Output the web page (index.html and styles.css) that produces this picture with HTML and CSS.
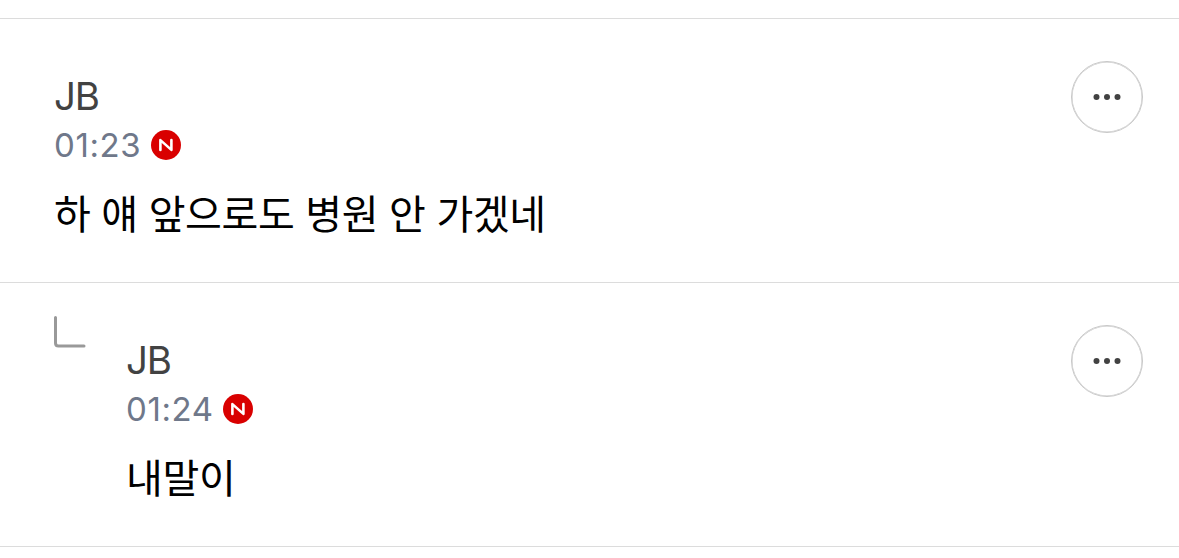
FILE: index.html
```
<!DOCTYPE html>
<html lang="ko">

<head>
    <meta charset="UTF-8">
    <meta name="viewport" content="width=device-width, initial-scale=1.0">
    <title>댓글</title>
    <link rel="stylesheet" href="styles.css">
</head>

<body>
    <ul class="comment-list">
        <li class="comment">
            <div class="comment-body">
                <div class="comment-name">JB</div>
                <div class="comment-info">
                    <span class="comment-time">01:23</span>
                    <svg class="icon-new" viewBox="0 0 30 30">
                        <circle cx="15" cy="15" r="15" />
                        <path d="M9.4 19.9V10.1L20.4 19.9V10.1" />
                    </svg>
                </div>
                <p class="comment-text">하 얘 앞으로도 병원 안 가겠네</p>
            </div>
            <button class="btn-more" type="button" aria-label="더보기">
                <svg viewBox="0 0 28 6">
                    <circle cx="3.5" cy="3" r="3" />
                    <circle cx="14" cy="3" r="3" />
                    <circle cx="24.5" cy="3" r="3" />
                </svg>
            </button>
        </li>
        <li class="comment reply">
            <svg class="icon-reply" viewBox="0 0 32 32">
                <path d="M1.5 1.5V27Q1.5 30 4.5 30H30" />
            </svg>
            <div class="comment-body">
                <div class="comment-name">JB</div>
                <div class="comment-info">
                    <span class="comment-time">01:24</span>
                    <svg class="icon-new" viewBox="0 0 30 30">
                        <circle cx="15" cy="15" r="15" />
                        <path d="M9.4 19.9V10.1L20.4 19.9V10.1" />
                    </svg>
                </div>
                <p class="comment-text">내말이</p>
            </div>
            <button class="btn-more" type="button" aria-label="더보기">
                <svg viewBox="0 0 28 6">
                    <circle cx="3.5" cy="3" r="3" />
                    <circle cx="14" cy="3" r="3" />
                    <circle cx="24.5" cy="3" r="3" />
                </svg>
            </button>
        </li>
    </ul>
</body>

</html>
```
FILE: styles.css
```
* {
    box-sizing: border-box;
}

body {
    margin: 0;
    padding-top: 18px;
    background: #fff;
    font-family: Inter, "Noto Sans CJK KR", sans-serif;
}

.comment-list {
    margin: 0;
    padding: 0;
    list-style: none;
    border-bottom: 1px solid #dcdcdc;
}

.comment {
    display: flex;
    align-items: flex-start;
    height: 264px;
    padding: 42px 36px 0 54px;
    border-top: 1px solid #dcdcdc;
}

.comment-body {
    flex: 1;
    padding-top: 11px;
}

.comment-name {
    height: 49px;
    line-height: 48px;
    font-size: 38.5px;
    letter-spacing: -1.2px;
    color: #424242;
}

.comment-info {
    display: flex;
    align-items: center;
    height: 48px;
    font-size: 33px;
    color: #6f788a;
}

.comment-time {
    width: 87px;
    letter-spacing: 0.6px;
}

.icon-new {
    width: 30px;
    height: 30px;
    margin-left: 10px;
}

.icon-new circle {
    fill: #d90000;
}

.icon-new path {
    fill: none;
    stroke: #fff;
    stroke-width: 2.6;
    stroke-linecap: round;
    stroke-linejoin: round;
}

.comment-text {
    margin: 16px 0 0;
    line-height: 60px;
    font-size: 40px;
    letter-spacing: -0.36px;
    color: #000;
}

.btn-more {
    display: flex;
    align-items: center;
    justify-content: center;
    width: 72px;
    height: 72px;
    padding: 0;
    border: 1px solid #c8c8c8;
    border-radius: 50%;
    background: #fff;
    box-shadow: inset 0 0 0 0.5px #c8c8c8;
}

.btn-more svg {
    width: 28px;
    height: 6px;
    fill: #424242;
}

.icon-reply {
    width: 32px;
    height: 32px;
    margin: -9px 40px 0 0;
    fill: none;
    stroke: #999;
    stroke-width: 3;
    stroke-linecap: round;
}
```
